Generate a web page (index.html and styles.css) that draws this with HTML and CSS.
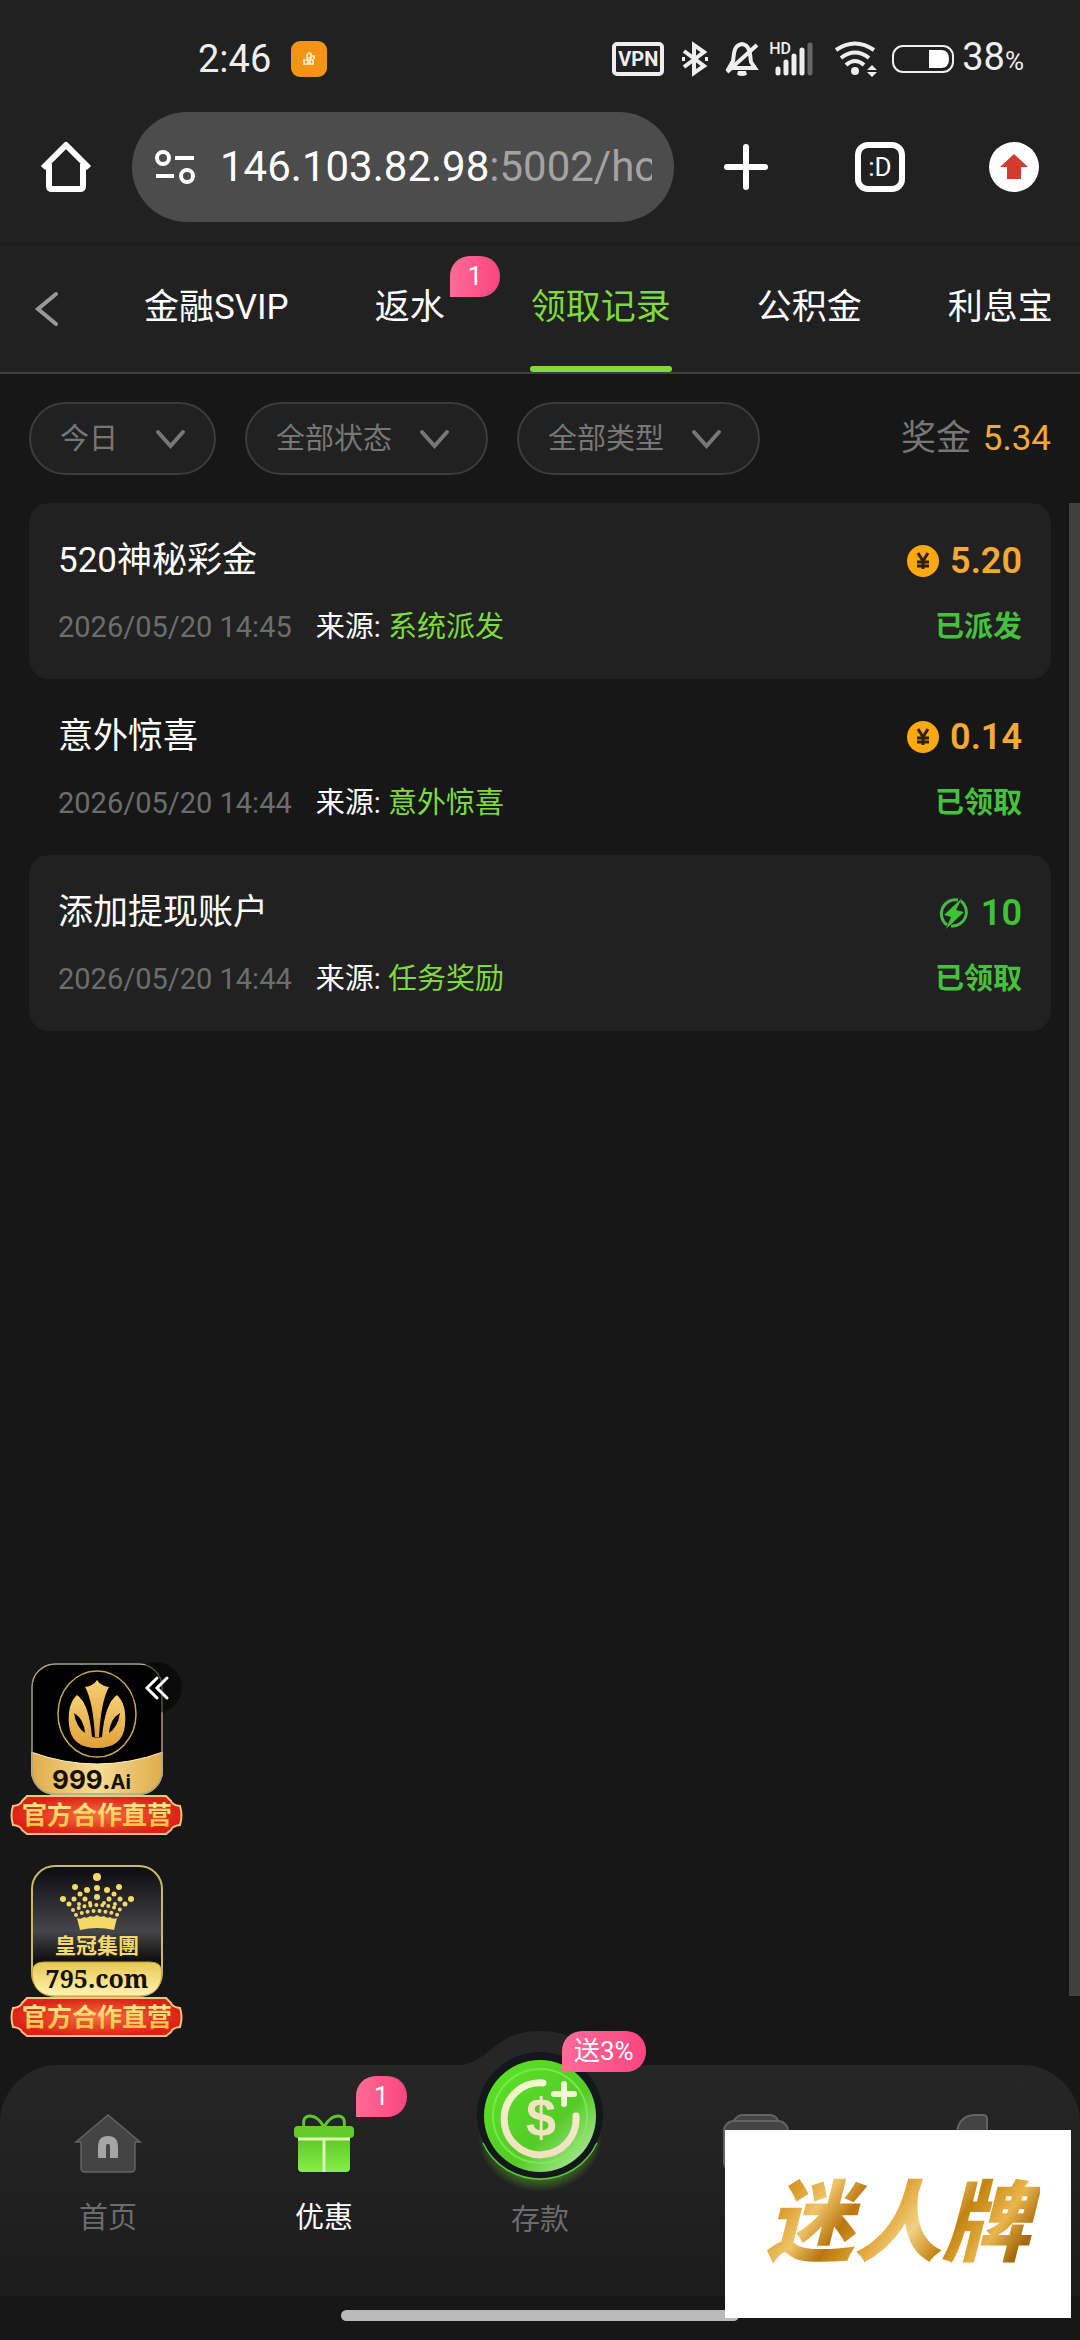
FILE: index.html
```html
<!DOCTYPE html>
<html lang="zh-CN">
<head>
    <meta charset="UTF-8">
    <meta name="viewport" content="width=device-width, initial-scale=1.0">
    <title>领取记录</title>
    <link rel="stylesheet" href="styles.css">
</head>
<body>
    <div class="status-bar">
        <span class="time">2:46</span>
        <svg class="app-dot" width="36" height="36" viewBox="0 0 36 36"><rect width="36" height="36" rx="9" fill="#f39417"/><path d="M13 19h4v4h-4zM19 19h3v4h-3zM16 14l2-2 2 1v4h-4zM21 15h2v3" fill="none" stroke="#fff3dc" stroke-width="1.6"/></svg>
        <div class="status-icons">
            <span class="vpn">VPN</span>
            <svg class="bluetooth" width="28" height="34" viewBox="0 0 28 34" fill="none" stroke="#eee" stroke-width="4"><path d="M3 9l20 15-10 7V3l10 7L3 25"/><path d="M1 17h3M24 17h3"/></svg>
            <svg class="bell" width="32" height="34" viewBox="0 0 32 34" fill="none" stroke="#eee" stroke-width="4"><path d="M3 26h26l-4-6c-1-5 0-17-9-18C7 3 8 14 7 19z"/><path d="M1 30L31 3"/><path d="M12 31q4 2 8 0z" fill="#eee"/></svg>
            <span class="signal"><small>HD</small>
                <svg width="38" height="34" viewBox="0 0 38 34" stroke-linecap="round" stroke-width="5" stroke="#eee"><path d="M3 27v4M11 20v11M19 14v17M27 8v23"/><path d="M35 3v28" stroke="#666"/></svg>
            </span>
            <svg class="wifi" width="44" height="36" viewBox="0 0 44 36" fill="none" stroke="#eee" stroke-width="4"><path d="M2 9Q21-4 40 9M7 17Q21 6 35 17M12 24Q21 16 30 24"/><circle cx="21" cy="30" r="4" fill="#eee" stroke="none"/><path d="M33 29l5-5 5 5zM33 31l5 5 5-5z" fill="#eee" stroke="none"/></svg>
            <svg class="battery" width="62" height="28" viewBox="0 0 62 28"><rect x="1" y="1" width="60" height="26" rx="10" fill="none" stroke="#eee" stroke-width="2"/><path d="M37 5h12q8 0 8 9t-8 9H37z" fill="#fff"/></svg>
            <span class="percent">38<small>%</small></span>
        </div>
    </div>

    <div class="toolbar">
        <button class="tool" aria-label="Home"><svg width="50" height="50" viewBox="0 0 50 50" fill="none" stroke="#fff" stroke-width="6" stroke-linejoin="round"><path d="M2 26L25 3l23 23"/><path d="M8 22v22q0 3 3 3h28q3 0 3-3V22"/></svg></button>
        <button class="address" aria-label="Address">
            <svg width="42" height="36" viewBox="0 0 42 36" fill="none" stroke="#fff" stroke-width="4"><circle cx="9" cy="9" r="6"/><circle cx="33" cy="27" r="6"/><path d="M21 9h19M2 27h18"/></svg>
            <span class="url">146.103.82.98<i>:5002/ho</i></span>
        </button>
        <div class="tools">
            <button class="tool" aria-label="New tab"><svg width="44" height="46" viewBox="0 0 44 46" stroke="#fff" stroke-width="6" stroke-linecap="round"><path d="M22 3v40M3 23h38"/></svg></button>
            <button class="tool tab-count">:D</button>
            <button class="tool update" aria-label="Update"><svg width="28" height="26" viewBox="0 0 28 26"><path d="M14 0l14 13h-7v12H7V13H0z" fill="#d03c2e"/></svg></button>
        </div>
    </div>

    <header class="tabs">
        <button class="back" aria-label="返回"><svg width="22" height="34" viewBox="0 0 22 34" fill="none" stroke="#999" stroke-width="4" stroke-linecap="round"><path d="M20 2L2 17l18 15"/></svg></button>
        <a href="#">金融SVIP</a>
        <a href="#">返水<b class="badge">1</b></a>
        <a href="#" class="active">领取记录</a>
        <a href="#">公积金</a>
        <a href="#">利息宝</a>
    </header>

    <section class="filters">
        <label class="filter filter-day">
            <select aria-label="日期"><option>今日</option></select>
            <svg width="29" height="18" viewBox="0 0 29 18"><path d="M2 2l12.500 14L27 2"/></svg>
        </label>
        <label class="filter">
            <select aria-label="状态"><option>全部状态</option></select>
            <svg width="29" height="18" viewBox="0 0 29 18"><path d="M2 2l12.500 14L27 2"/></svg>
        </label>
        <label class="filter">
            <select aria-label="类型"><option>全部类型</option></select>
            <svg width="29" height="18" viewBox="0 0 29 18"><path d="M2 2l12.500 14L27 2"/></svg>
        </label>
        <p class="total">奖金 <span>5.34</span></p>
    </section>

    <main>
        <article class="record">
            <div class="row">
                <h2>520神秘彩金</h2>
                <span class="amount"><svg width="32" height="32" viewBox="0 0 32 32"><circle cx="16" cy="16" r="16" fill="#fca90f"/><path d="M11 8l5 8 5-8M10 17h12M10 21h12M16 16v8" fill="none" stroke="#2a2113" stroke-width="3"/></svg>5.20</span>
            </div>
            <div class="row">
                <p><time>2026/05/20 14:45</time>来源: <em>系统派发</em></p>
                <span class="state">已派发</span>
            </div>
        </article>
        <article class="record">
            <div class="row">
                <h2>意外惊喜</h2>
                <span class="amount"><svg width="32" height="32" viewBox="0 0 32 32"><circle cx="16" cy="16" r="16" fill="#fca90f"/><path d="M11 8l5 8 5-8M10 17h12M10 21h12M16 16v8" fill="none" stroke="#2a2113" stroke-width="3"/></svg>0.14</span>
            </div>
            <div class="row">
                <p><time>2026/05/20 14:44</time>来源: <em>意外惊喜</em></p>
                <span class="state">已领取</span>
            </div>
        </article>
        <article class="record">
            <div class="row">
                <h2>添加提现账户</h2>
                <span class="amount green"><svg width="32" height="32" viewBox="0 0 32 32"><path d="M9 28A14 14 0 0 1 20 3M23 4a14 14 0 0 1-10 25" fill="none" stroke="#4cb748" stroke-width="3"/><path d="M24 1L6 18l7 2-5 12 18-17-8-2z" fill="#3cc433"/></svg>10</span>
            </div>
            <div class="row">
                <p><time>2026/05/20 14:44</time>来源: <em>任务奖励</em></p>
                <span class="state">已领取</span>
            </div>
        </article>
        <div class="scrollbar"></div>

        <!-- partner links -->
        <aside class="partners">
            <a href="#">
                <svg width="173" height="173" viewBox="0 0 173 173">
                    <defs>
                        <linearGradient id="gold" x1="0" y1="0" x2="0" y2="1"><stop offset="0" stop-color="#f6cf77"/><stop offset="1" stop-color="#dfa137"/></linearGradient>
                        <linearGradient id="pale" x1="0" y1="0" x2="1" y2="0"><stop offset="0" stop-color="#dfac4a"/><stop offset=".5" stop-color="#f6dc96"/><stop offset="1" stop-color="#dfac4a"/></linearGradient>
                        <radialGradient id="red"><stop offset="0" stop-color="#f5713c"/><stop offset="1" stop-color="#dc2217"/></radialGradient>
                        <linearGradient id="letters" x1="0" y1="0" x2="0" y2="1"><stop offset="0" stop-color="#fff3a4"/><stop offset="1" stop-color="#f6ba35"/></linearGradient>
                        <clipPath id="tile"><rect x="21" y="0" width="132" height="132" rx="24"/></clipPath>
                    </defs>
                    <g clip-path="url(#tile)">
                        <rect x="21" width="132" height="132" fill="#000"/>
                        <path d="M21 89q66 24 132 0v43H21z" fill="url(#pale)" stroke="#fff0c4"/>
                        <ellipse cx="87" cy="51" rx="39" ry="43" fill="none" stroke="#cba552" stroke-width="1.500"/>
                        <path d="M67 32q-10 9-8 30 2 23 28 23t28-23q2-21-8-30-12 8-15 42-5 1-10 0-3-34-15-42z" fill="url(#gold)"/>
                        <path d="M87 17q4 6 12 7-8 14-10 50h-4q-2-36-10-50 8-1 12-7z" fill="url(#gold)"/>
                        <path d="M64 50q10 6 11 20-9-6-11-20zM110 50q-10 6-11 20 9-6 11-20z" fill="#000"/>
                    </g>
                    <rect x="22" y="1" width="130" height="130" rx="23" fill="none" stroke="#aaa38e" stroke-width="1.500"/>
                    <text x="42" y="126" class="site-bold">999.<tspan class="site-small">Ai</tspan></text>
                    <path d="M17 133h139l5 5q1 4 9 5 3 9 0 19-8 1-9 5l-5 4H17l-5-4q-1-4-9-5-3-10 0-19 8-1 9-5z" fill="url(#red)" stroke="#f5c57d" stroke-width="2"/>
                    <text x="87" y="161" class="ribbon-text">官方合作直营</text>
                </svg>
            </a>
            <a href="#">
                <svg width="173" height="173" viewBox="0 0 173 173">
                    <defs>
                        <linearGradient id="steel" x1="0" y1="0" x2="0" y2="1"><stop offset="0" stop-color="#0b0b0d"/><stop offset=".5" stop-color="#46464a"/><stop offset=".72" stop-color="#111"/></linearGradient>
                        <linearGradient id="plate" x1="0" y1="0" x2="0" y2="1"><stop offset="0" stop-color="#e6c952"/><stop offset="1" stop-color="#fff3b2"/></linearGradient>
                    </defs>
                    <rect x="22" y="1" width="130" height="130" rx="23" fill="url(#steel)" stroke="#c9b965" stroke-width="2"/>
                    <g fill="#f3da68">
                        <circle cx="87" cy="12" r="4"/>
                        <g><circle cx="65" cy="22" r="3"/><circle cx="109" cy="22" r="3"/><circle cx="87" cy="23" r="3"/><circle cx="77" cy="25" r="3"/><circle cx="97" cy="25" r="3"/><circle cx="53" cy="34" r="3"/><circle cx="121" cy="34" r="3"/></g>
                        <g><circle cx="70" cy="29" r="2.500"/><circle cx="104" cy="29" r="2.500"/><circle cx="87" cy="32" r="3"/><circle cx="64" cy="34" r="2.500"/><circle cx="110" cy="34" r="2.500"/><circle cx="75" cy="34" r="2.500"/><circle cx="99" cy="34" r="2.500"/><circle cx="59" cy="39" r="2.500"/><circle cx="115" cy="39" r="2.500"/><circle cx="80" cy="38" r="2"/><circle cx="94" cy="38" r="2"/><circle cx="69" cy="39" r="2"/><circle cx="105" cy="39" r="2"/></g>
                        <path d="M63 45q24-10 48 0M66 50q21-8 42 0" fill="none" stroke="#f3da68" stroke-width="4" stroke-linecap="round" stroke-dasharray="0 6"/>
                        <path d="M67 53q4 2 7-1 3 2 6-1 4 2 7-1 3 3 7 1 3 3 6 1 3 3 7 1l-3 12q-17-4-34 0z"/>
                    </g>
                    <text x="87" y="88" class="crown-text">皇冠集團</text>
                    <path d="M22 108q0-11 12-11h106q12 0 12 11-1 23-23 23H45q-22 0-23-23z" fill="url(#plate)" stroke="#c19b32"/>
                    <text x="87" y="123" class="site-serif">795.com</text>
                    <path d="M17 133h139l5 5q1 4 9 5 3 9 0 19-8 1-9 5l-5 4H17l-5-4q-1-4-9-5-3-10 0-19 8-1 9-5z" fill="url(#red)" stroke="#f5c57d" stroke-width="2"/>
                    <text x="87" y="161" class="ribbon-text">官方合作直营</text>
                </svg>
            </a>
            <button class="collapse" aria-label="收起"><svg width="24" height="24" viewBox="0 0 24 24" fill="none" stroke="#fff" stroke-width="3" stroke-linecap="round"><path d="M12 2L2 12l10 10M22 2L12 12l10 10"/></svg></button>
        </aside>
    </main>

    <nav class="bottom-nav">
        <svg class="hump" width="170" height="35" viewBox="0 0 170 35"><path d="M0 35C38 31 38 0 85 0s47 31 85 35z" fill="#262626"/></svg>
        <a href="#">
            <svg width="66" height="59" viewBox="0 0 66 59"><path d="M33 1L1 28h5v26q0 4 4 4h46q4 0 4-4V28h5z" fill="#444" stroke="#636363" stroke-width="1.500"/><path d="M27 44V33q0-7 6-7t6 7v11" fill="none" stroke="#a5a5a5" stroke-width="8"/></svg>
            首页
        </a>
        <a href="#" class="current">
            <svg width="62" height="59" viewBox="0 0 62 59">
                <defs><linearGradient id="box" x1="0" y1="0" x2="0" y2="1"><stop offset="0" stop-color="#5fc826"/><stop offset="1" stop-color="#87ee49"/></linearGradient></defs>
                <path d="M31 13Q25 2 17 2t-6 11M31 13Q37 2 45 2t6 11" fill="none" stroke="#62c42c" stroke-width="3"/>
                <rect x="1" y="12" width="60" height="12" rx="4" fill="#63cc29"/>
                <path d="M5 24h52v30q0 4-4 4H9q-4 0-4-4z" fill="url(#box)"/>
                <path d="M5 25h52M31 25v33" stroke="#dcf8b6" stroke-width="3"/>
            </svg>
            优惠<b class="badge">1</b>
        </a>
        <a href="#" class="deposit">
            <svg width="140" height="130" viewBox="0 0 140 130">
                <defs>
                    <linearGradient id="coin" x1="0" y1="0" x2="1" y2="1"><stop offset="0" stop-color="#5be527"/><stop offset=".6" stop-color="#54cb27"/><stop offset=".8" stop-color="#8fdc72"/><stop offset="1" stop-color="#c7efb8"/></linearGradient>
                    <radialGradient id="glow"><stop offset=".7" stop-color="#59bf26"/><stop offset="1" stop-color="#59bf26" stop-opacity="0"/></radialGradient>
                    <linearGradient id="cream" x1="0" y1="0" x2="0" y2="1"><stop offset="0" stop-color="#f2f7cf"/><stop offset="1" stop-color="#f4dfc1"/></linearGradient>
                </defs>
                <ellipse cx="70" cy="92" rx="62" ry="55" fill="url(#glow)" opacity=".6"/>
                <circle cx="70" cy="70" r="63" fill="#13181b"/>
                <path d="M13 98a63 63 0 0 0 114 0" fill="none" stroke="#5cc637" stroke-width="1.500"/>
                <circle cx="70" cy="71" r="56" fill="url(#coin)"/>
                <circle cx="70" cy="71" r="47" fill="none" stroke="#7df04f" stroke-width="2" opacity=".8"/>
                <path d="M73 38a36 36 0 1 0 33 33" fill="none" stroke="url(#cream)" stroke-width="7" stroke-linecap="round"/>
                <path d="M94 39v20M84 49h20" stroke="#eff8d2" stroke-width="6" stroke-linecap="round"/>
                <text x="71" y="91" class="dollar">$</text>
            </svg>
            存款<b class="badge">送3%</b>
        </a>
        <a href="#" aria-label="客服">
            <svg width="66" height="59" viewBox="0 0 66 59" fill="#444" stroke="#636363" stroke-width="2"><path d="M10 8q4-7 9-7h28q6 0 9 7z"/><rect x="1" y="7" width="64" height="51" rx="10"/></svg>
        </a>
        <a href="#" aria-label="我的">
            <svg width="32" height="59" viewBox="0 0 32 59"><path d="M1 58V18Q3 1 20 1h7q4 0 4 4v53z" fill="#444" stroke="#636363" stroke-width="2"/></svg>
        </a>
    </nav>

    <div class="gesture-bar"><span></span></div>
    <div class="promo"><span>迷人牌</span></div>
</body>
</html>
```
FILE: styles.css
```css
* { margin: 0; padding: 0; box-sizing: border-box; }
body { position: relative; display: flex; flex-direction: column; min-height: 100vh; background: #171717; color: #fff; font-family: Roboto, "Noto Sans CJK SC", sans-serif; font-size: 29px; line-height: 36px; overflow-x: hidden; }
a { color: inherit; text-decoration: none; }
button { background: none; border: none; color: inherit; font-family: inherit; cursor: pointer; }
svg { flex: none; display: block; overflow: visible; }

/* Status bar */
.status-bar { display: flex; align-items: center; height: 92px; padding: 26px 56px 0 198px; background: #212121; color: #eee; font-size: 38px; }
.app-dot { margin-left: 20px; }
.status-icons { display: flex; align-items: center; margin-left: auto; }
.vpn { width: 52px; height: 34px; border: 4px solid #eee; border-radius: 5px; font-size: 20px; font-weight: bold; line-height: 26px; text-align: center; }
.bluetooth { margin-left: 17px; }
.bell { margin-left: 17px; }
.signal { position: relative; margin-left: 17px; }
.signal small { position: absolute; left: -6px; top: 0; font-size: 16px; font-weight: 500; line-height: 14px; }
.wifi { margin-left: 21px; }
.battery { margin-left: 14px; }
.percent { margin-left: 8px; }
.percent small { font-size: 26px; }

/* Browser toolbar */
.toolbar { display: flex; align-items: center; height: 153px; padding: 0 41px; background: #212121; border-bottom: 3px solid #1e1e1e; }
.tool { display: flex; align-items: center; justify-content: center; width: 50px; height: 50px; }
.address { display: flex; align-items: center; gap: 24px; flex: 1; min-width: 0; height: 110px; margin-left: 41px; padding: 0 22px; border-radius: 55px; background: #4c4c4c; }
.url { flex: 1; overflow: hidden; font-size: 42px; line-height: 56px; text-align: left; white-space: nowrap; }
.url i { color: #a3a3a3; font-style: normal; }
.tools { display: flex; gap: 84px; margin-left: 47px; }
.tab-count { border: 6px solid #fff; border-radius: 13px; font-size: 26px; }
.update { background: #fff; border-radius: 50%; }

/* Tabs */
.tabs { display: flex; height: 129px; background: #212121; border-bottom: 2px solid #404040; overflow: hidden; }
.tabs a { position: relative; flex: none; padding: 0 43px; font-size: 35px; line-height: 126px; white-space: nowrap; }
.tabs .active { color: #7ddb3b; }
.tabs .active::after { content: ""; position: absolute; left: 42px; right: 42px; bottom: 0; height: 6px; border-radius: 3px; background: #7ddb3b; }
.back { flex: none; width: 101px; padding-left: 36px; }
.badge { position: absolute; left: 140px; top: 11px; height: 41px; padding: 0 18px; border-radius: 20px 20px 20px 0; background: linear-gradient(90deg, #ff6b98, #fb4580); color: #fff; font-size: 26px; font-weight: normal; line-height: 40px; white-space: nowrap; }
.tabs .badge { left: calc(100% - 38px); }

/* Filters */
.filters { display: flex; align-items: center; gap: 29px; padding: 28px 29px; }
.filter { display: flex; align-items: center; justify-content: space-between; min-width: 243px; height: 73px; padding: 0 37px 0 29px; border: 2px solid #3c3c3c; border-radius: 37px; background: #212121; }
.filter-day { min-width: 187px; padding-right: 29px; }
.filter select { appearance: none; border: none; background: none; color: #777; font-family: inherit; font-size: 29px; line-height: 36px; }
.filter path { fill: none; stroke: #777; stroke-width: 4; stroke-linecap: round; }
.total { margin-left: auto; color: #777; font-size: 35px; line-height: 44px; white-space: nowrap; }
.total span { margin-left: 3px; color: #f3a935; }

/* Records */
main { position: relative; flex: 1; padding: 0 29px; }
.record { display: flex; flex-direction: column; gap: 26px; height: 176px; padding: 36px 29px 0; border-radius: 20px; }
.record:nth-child(odd) { background: #212121; }
.row { display: flex; align-items: center; justify-content: space-between; }
.row h2 { font-size: 35px; font-weight: normal; line-height: 44px; }
.row time { margin-right: 24px; color: #6d6d6d; }
.row em { color: #7ddb3b; font-style: normal; }
.amount { display: flex; align-items: center; gap: 11px; color: #f5a932; font-size: 36px; font-weight: 600; line-height: 44px; }
.green { color: #3cc433; }
.state { color: #46c03f; font-weight: 600; }
.scrollbar { position: absolute; right: 0; top: 0; bottom: 69px; width: 11px; background: #404040; }

/* Partner links */
.partners { position: absolute; left: 10px; bottom: 27px; display: flex; flex-direction: column; gap: 29px; }
.collapse { position: absolute; left: 121px; top: -1px; display: flex; align-items: center; justify-content: center; width: 51px; height: 51px; border-radius: 50%; background: rgba(0, 0, 0, 0.5); }
.site-bold { fill: #15100a; font: bold 26px Inter, "Liberation Sans", sans-serif; }
.site-small { font-size: 20px; }
.site-serif { fill: #15100a; font: bold 25px "Noto Serif", "Liberation Serif", serif; text-anchor: middle; }
.crown-text { fill: #f3da68; font: bold 21px "Noto Sans CJK TC", sans-serif; text-anchor: middle; }
.ribbon-text { fill: url(#letters); font: bold 25px "Noto Sans CJK SC", sans-serif; text-anchor: middle; }

/* Bottom navigation */
.bottom-nav { position: relative; display: flex; height: 231px; border-radius: 58px 58px 0 0; background: linear-gradient(#262626, #1c1c1c); color: #6c6c6c; }
.hump { position: absolute; left: calc(50% - 85px); top: -34px; }
.bottom-nav a { position: relative; display: flex; flex: 1; flex-direction: column; align-items: center; gap: 27px; padding-top: 49px; }
.bottom-nav .current { color: #fff; }
.deposit svg { margin-top: -69px; }
.dollar { fill: #f4e3c2; font: bold 54px "Liberation Sans", sans-serif; text-anchor: middle; }
.deposit .badge { left: 130px; top: -34px; padding: 0 12px; }
.gesture-bar { display: flex; justify-content: center; height: 44px; padding-top: 14px; }
.gesture-bar span { width: 398px; height: 11px; border-radius: 6px; background: #bababa; }

/* Promo */
.promo { position: absolute; right: 9px; bottom: 22px; display: flex; align-items: center; justify-content: center; width: 346px; height: 188px; background: #fff; }
.promo span { padding: 0 10px; background: linear-gradient(125deg, #a8690c, #d99a26 15%, #efc469 25%, #b9760f 35%, #dfa434 45%, #f3d083 55%, #c4830f 66%, #e9b64c 78%, #a3660b 88%, #d59a2b); background-clip: text; -webkit-background-clip: text; color: transparent; font-size: 88px; font-weight: 900; font-style: italic; line-height: 120px; }
```
